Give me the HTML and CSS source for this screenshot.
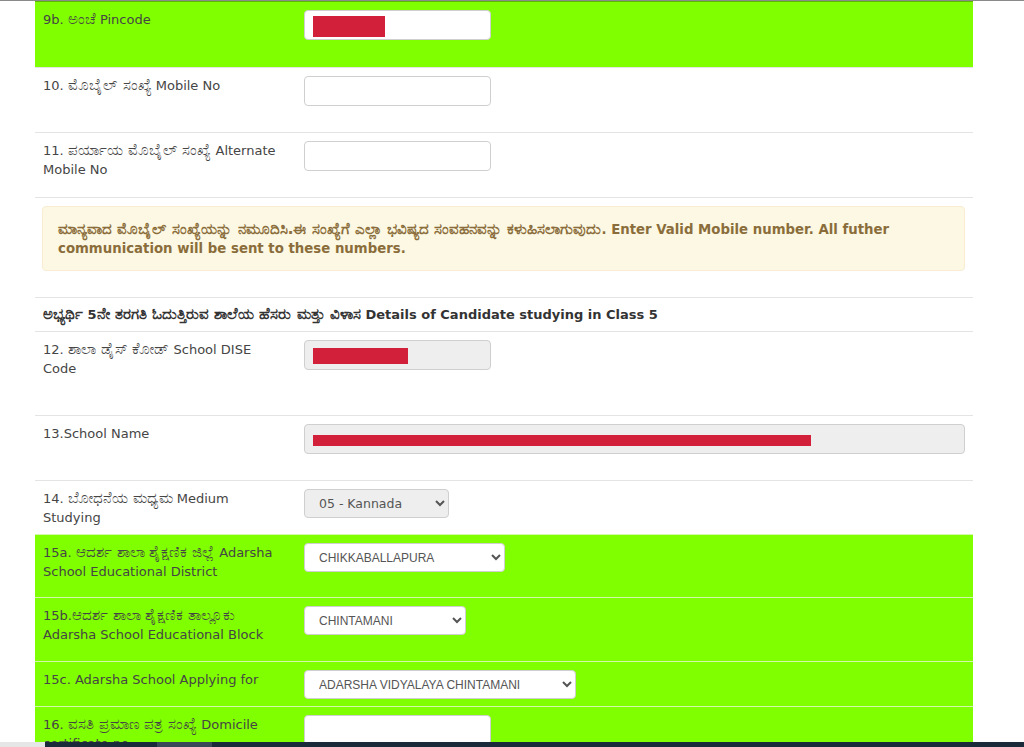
FILE: index.html
```html
<!DOCTYPE html>
<html lang="kn">
<head>
    <meta charset="UTF-8">
    <meta name="viewport" content="width=device-width, initial-scale=1.0">
    <title>Adarsha Vidyalaya Application</title>
    <link rel="stylesheet" href="styles.css">
</head>
<body>
    <div class="form-table">
        <div class="form-row green row-pin">
            <div class="label-cell">9b. <span class="kn">ಅಂಚೆ</span> Pincode</div>
            <div class="field-cell">
                <div class="form-control"><span class="redact redact-pin"></span></div>
            </div>
        </div>

        <div class="form-row row-std">
            <div class="label-cell">10. <span class="kn">ಮೊಬೈಲ್ ಸಂಖ್ಯೆ</span> Mobile No</div>
            <div class="field-cell">
                <input class="form-control" type="text">
            </div>
        </div>

        <div class="form-row row-std">
            <div class="label-cell">11. <span class="kn">ಪರ್ಯಾಯ ಮೊಬೈಲ್ ಸಂಖ್ಯೆ</span> Alternate<br>Mobile No</div>
            <div class="field-cell">
                <input class="form-control" type="text">
            </div>
        </div>

        <div class="form-row full">
            <div class="wide-cell">
                <div class="alert"><span class="kn">ಮಾನ್ಯವಾದ ಮೊಬೈಲ್ ಸಂಖ್ಯೆಯನ್ನು ನಮೂದಿಸಿ.ಈ ಸಂಖ್ಯೆಗೆ ಎಲ್ಲಾ ಭವಿಷ್ಯದ ಸಂವಹನವನ್ನು ಕಳುಹಿಸಲಾಗುವುದು</span>. Enter Valid Mobile number. All futher<br>communication will be sent to these numbers.</div>
            </div>
        </div>

        <div class="form-row full">
            <div class="wide-cell section-title"><span class="kn">ಅಭ್ಯರ್ಥಿ</span> 5<span class="kn">ನೇ ತರಗತಿ ಓದುತ್ತಿರುವ ಶಾಲೆಯ ಹೆಸರು ಮತ್ತು ವಿಳಾಸ</span> Details of Candidate studying in Class 5</div>
        </div>

        <div class="form-row row-tall">
            <div class="label-cell">12. <span class="kn">ಶಾಲಾ ಡೈಸ್ ಕೋಡ್</span> School DISE<br>Code</div>
            <div class="field-cell">
                <div class="form-control readonly"><span class="redact redact-dise"></span></div>
            </div>
        </div>

        <div class="form-row row-std">
            <div class="label-cell">13.School Name</div>
            <div class="field-cell">
                <div class="form-control readonly block"><span class="redact redact-name"></span></div>
            </div>
        </div>

        <div class="form-row row-mid">
            <div class="label-cell">14. <span class="kn">ಬೋಧನೆಯ ಮಧ್ಯಮ</span> Medium<br>Studying</div>
            <div class="field-cell">
                <select class="select readonly w-medium">
                    <option>05 - Kannada</option>
                </select>
            </div>
        </div>

        <div class="form-row green row-mid2">
            <div class="label-cell">15a. <span class="kn">ಆದರ್ಶ ಶಾಲಾ ಶೈಕ್ಷಣಿಕ ಜಿಲ್ಲೆ</span> Adarsha<br>School Educational District</div>
            <div class="field-cell">
                <select class="select w-district">
                    <option>CHIKKABALLAPURA</option>
                </select>
            </div>
        </div>

        <div class="form-row green row-mid3">
            <div class="label-cell">15b.<span class="kn">ಆದರ್ಶ ಶಾಲಾ ಶೈಕ್ಷಣಿಕ ತಾಲ್ಲೂಕು</span><br>Adarsha School Educational Block</div>
            <div class="field-cell">
                <select class="select w-block">
                    <option>CHINTAMANI</option>
                </select>
            </div>
        </div>

        <div class="form-row green">
            <div class="label-cell">15c. Adarsha School Applying for</div>
            <div class="field-cell">
                <select class="select w-school">
                    <option>ADARSHA VIDYALAYA CHINTAMANI</option>
                </select>
            </div>
        </div>

        <div class="form-row green row-std">
            <div class="label-cell">16. <span class="kn">ವಸತಿ ಪ್ರಮಾಣ ಪತ್ರ ಸಂಖ್ಯೆ</span> Domicile<br>certificate no</div>
            <div class="field-cell">
                <input class="form-control" type="text">
            </div>
        </div>
    </div>

    <div class="taskbar">
        <span class="tb-edge"></span>
        <span class="tb-bar"></span>
        <span class="tb-active"></span>
        <span class="tb-bar grow"></span>
    </div>
</body>
</html>
```

FILE: styles.css
```css
:root {
    --green: #80ff00;
    --line: #e4e4e4;
    --text: #454545;
    --dark: #333;
}
html, body {
    margin: 0;
    height: 100%;
    overflow: hidden;
}
body {
    font-family: "DejaVu Sans", Verdana, sans-serif;
    font-size: 13px;
    line-height: 19px;
    color: var(--text);
    background: #fff;
    border-top: 1px solid #8a8a8a;
}
.kn {
    font-size: 15px;
}
.form-table {
    width: 938px;
    margin-left: 35px;
}
.form-row {
    display: grid;
    grid-template-columns: 261px 1fr;
    border-top: 1px solid var(--line);
    box-sizing: border-box;
}
.form-row.full {
    grid-template-columns: 1fr;
}
.form-row.green {
    background: var(--green);
    border-top-color: #d4f7ae;
}
.form-row.row-pin {
    border-top-color: #5cb800;
    min-height: 66px;
}
.row-std { min-height: 65px; }
.row-tall { min-height: 84px; }
.row-mid { min-height: 54px; }
.row-mid2 { min-height: 63px; }
.row-mid3 { min-height: 64px; }

.label-cell, .field-cell, .wide-cell {
    padding: 8px 8px 7px;
}
.wide-cell {
    padding-left: 7px;
}
.section-title {
    padding: 7px 8px;
    font-weight: bold;
    color: var(--dark);
}

.form-control {
    display: flex;
    align-items: center;
    box-sizing: border-box;
    width: 187px;
    height: 30px;
    padding: 0 8px;
    margin: 0;
    border: 1px solid #cfcfcf;
    border-radius: 4px;
    background: #fff;
    font: inherit;
}
.form-control.readonly {
    background: #eee;
}
.form-control.block {
    width: 100%;
}
.redact {
    display: block;
    margin-top: 2px;
    background: #d21f3a;
}
.redact-pin { width: 72px; height: 21px; }
.redact-dise { width: 95px; height: 16px; }
.redact-name { width: 498px; height: 11px; }

.select {
    box-sizing: border-box;
    height: 29px;
    padding: 0 6px 0 10px;
    margin: 0;
    border: 1px solid #cfcfcf;
    border-radius: 4px;
    background-color: #fff;
    color: #555;
    font-family: "Liberation Sans", Arial, sans-serif;
    font-size: 12px;
}
.select.readonly {
    background-color: #eee;
}
.w-medium {
    width: 145px;
    font-family: "DejaVu Sans", Verdana, sans-serif;
    font-size: 12.5px;
}
.w-district { width: 201px; }
.w-block { width: 162px; }
.w-school { width: 272px; }

.alert {
    padding: 13px 15px 12px;
    margin-bottom: 19px;
    border: 1px solid #f8ecd2;
    border-radius: 4px;
    background: #fcf8e3;
    color: #8a6d3b;
    font-weight: bold;
    font-size: 13.3px;
}

.taskbar {
    position: fixed;
    left: 0;
    right: 0;
    bottom: 0;
    height: 5px;
    display: flex;
}
.tb-edge {
    width: 45px;
    background: #e6e6e6;
}
.tb-bar {
    width: 112px;
    background: #1b2a3b;
}
.tb-bar.grow {
    flex: 1;
}
.tb-active {
    width: 55px;
    background: #3a4756;
}
```
